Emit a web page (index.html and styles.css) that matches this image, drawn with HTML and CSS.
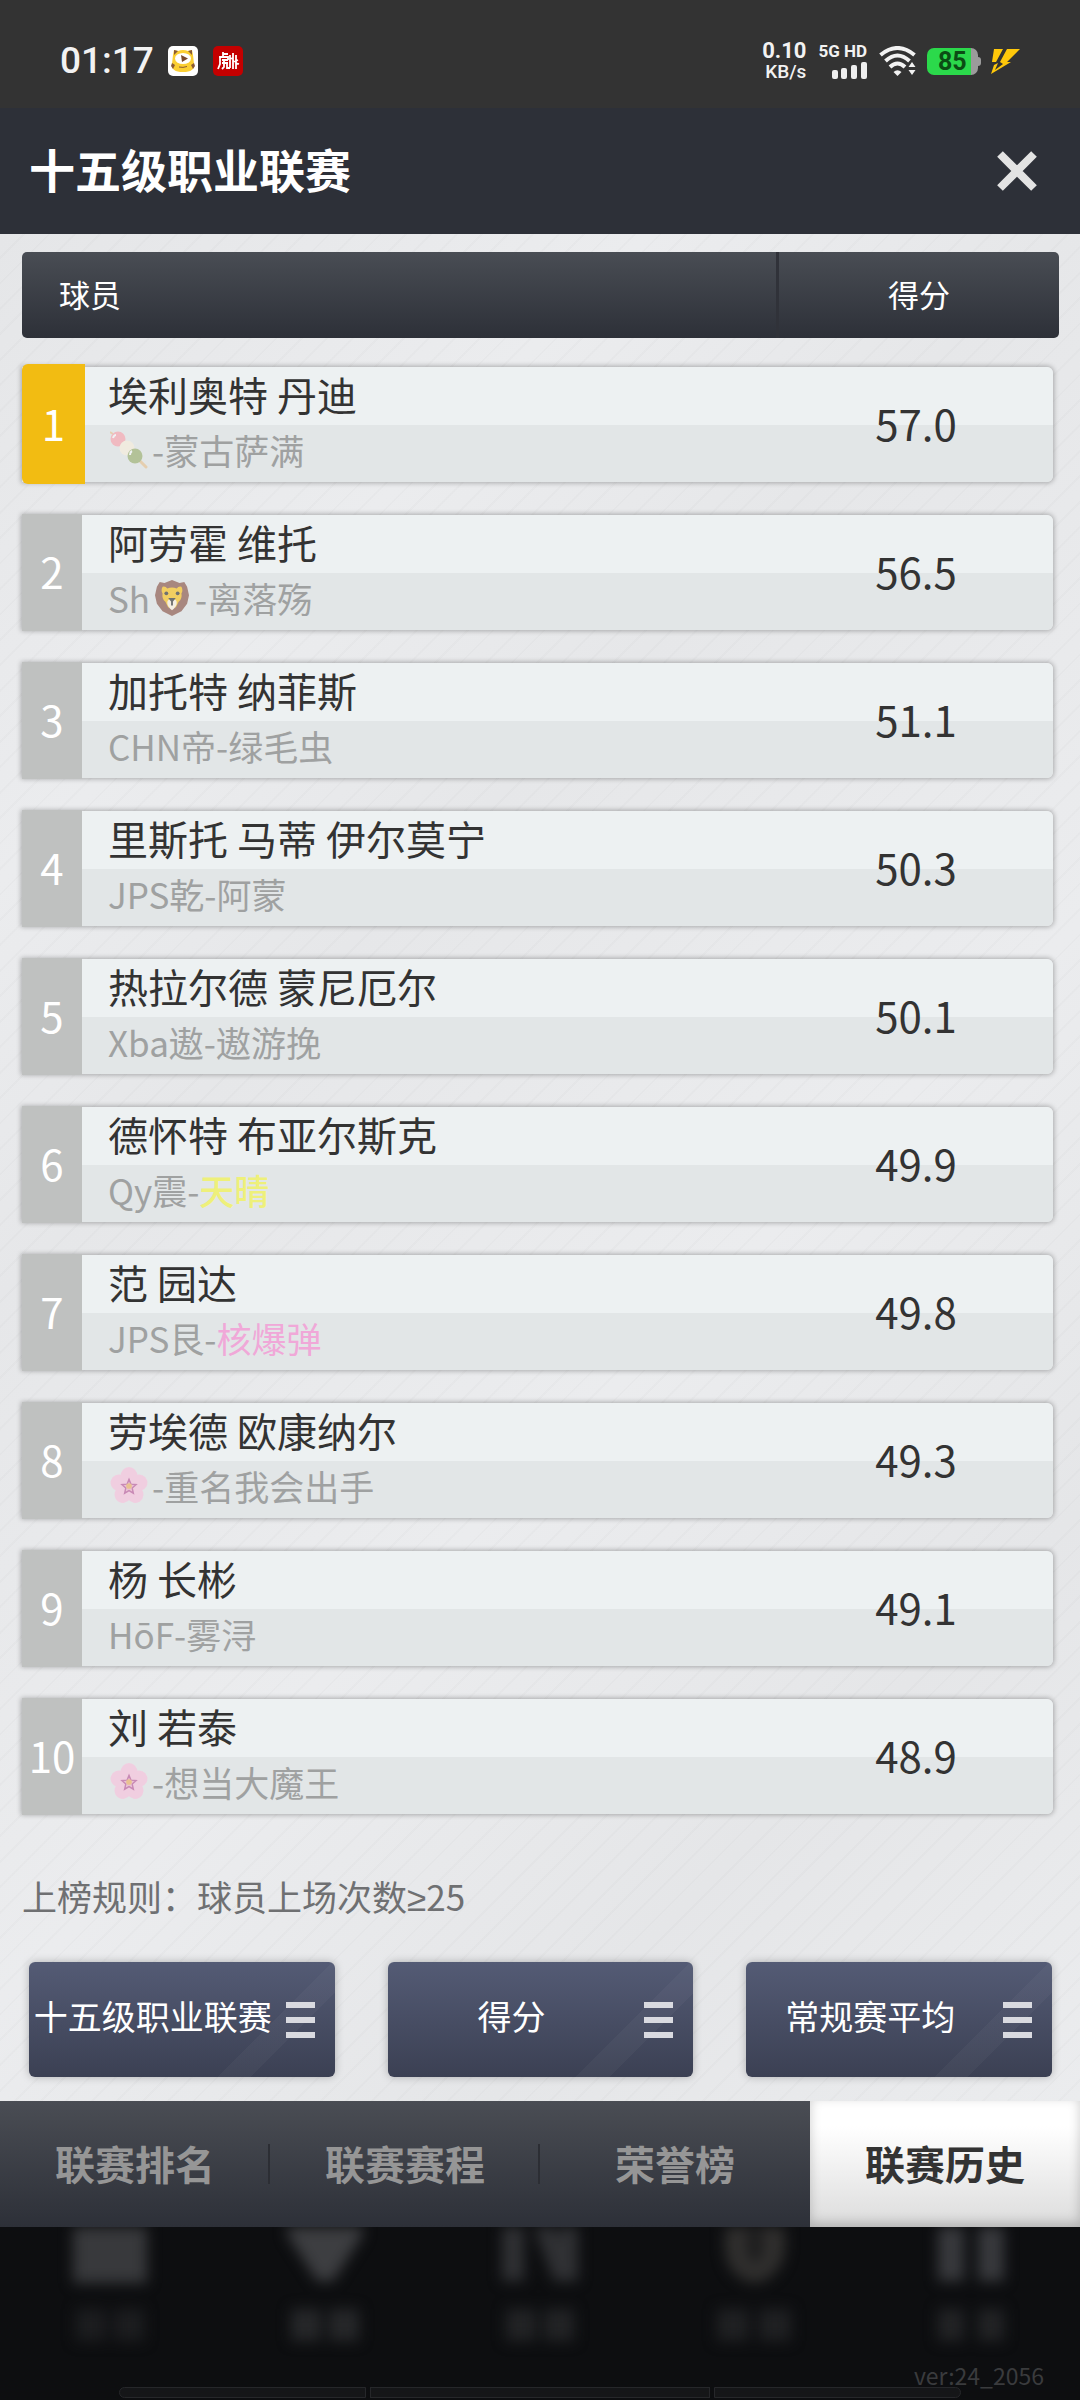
FILE: index.html
```html
<!DOCTYPE html>
<html lang="zh-CN">
<head>
  <meta charset="UTF-8">
  <meta name="viewport" content="width=device-width, initial-scale=1.0">
  <title>十五级职业联赛</title>
  <link rel="stylesheet" href="styles.css">
</head>
<body>
  <!-- shared icons -->
  <svg class="symbols" aria-hidden="true">
    <symbol id="sakura" viewBox="0 0 40 40">
      <g fill="#ffb8da">
        <ellipse cx="20" cy="10" rx="9" ry="10"/>
        <ellipse cx="20" cy="10" rx="9" ry="10" transform="rotate(72 20 20)"/>
        <ellipse cx="20" cy="10" rx="9" ry="10" transform="rotate(144 20 20)"/>
        <ellipse cx="20" cy="10" rx="9" ry="10" transform="rotate(216 20 20)"/>
        <ellipse cx="20" cy="10" rx="9" ry="10" transform="rotate(288 20 20)"/>
      </g>
      <path d="M20 13l2 5 5.500.5-4.100 3.700 1.200 5.400-4.600-2.800-4.600 2.800 1.200-5.400-4.100-3.700 5.500-.5z" fill="#f4a0c4" stroke="#b02f85" stroke-width="1.500"/>
      <circle cx="20" cy="20" r="3" fill="#f0a040"/>
    </symbol>
    <symbol id="menu" viewBox="0 0 29 36">
      <path d="M0 0h29v6H0zM0 15h29v6H0zM0 30h29v6H0z" fill="currentColor"/>
    </symbol>
  </svg>

  <div class="status-bar">
    <span class="time">01:17</span>
    <svg class="app-icon" viewBox="0 0 30 30">
      <rect width="30" height="30" rx="5" fill="#fff"/>
      <path d="M5 9l1-5 4 1q5-2 10 0l4-1 1 5 1 9q1 8-11 8T4 18z" fill="#fbcf33"/>
      <path d="M6 4l4 1-4 4zM24 4l-4 1 4 4zM4 17l3 2-2 4-2-3zM26 17l-3 2 2 4 2-3z" fill="#8a5a33"/>
      <ellipse cx="15" cy="12.500" rx="8" ry="5.500" fill="#fff"/>
      <path d="M13 9l7 3.500-6 3.500z" fill="#7a4a2c"/>
      <path d="M11 21q4 1 8-.5" fill="none" stroke="#8a5a33"/>
    </svg>
    <svg class="app-icon" viewBox="0 0 30 30">
      <rect width="30" height="30" rx="5" fill="#c40000"/>
      <path d="M10 6v5M10 8h5M6 11h9v3M7 11v7l-2 5M9 14h6M9 17h6M11 14v7l-2 2M14 17v5h3M17 9v13M17 13l3-1M20 7v16M23 9v14M20 16l5-2M22 17l4 1" fill="none" stroke="#fff" stroke-width="1.800"/>
    </svg>
    <div class="status-right">
      <div class="speed"><b>0.10</b><span>KB/s</span></div>
      <div class="signal">
        <span>5G HD</span>
        <svg width="35" height="17" viewBox="0 0 35 17" fill="#eee">
          <rect x="0" y="8" width="6" height="9" rx="2"/>
          <rect x="9" y="6" width="6" height="11" rx="2"/>
          <rect x="19" y="3" width="6" height="14" rx="2"/>
          <rect x="29" y="0" width="6" height="17" rx="2"/>
        </svg>
      </div>
      <svg class="wifi" width="37" height="30" viewBox="0 0 37 30">
        <g fill="none" stroke="#f2f2f2" stroke-width="4">
          <path d="M1.500 9Q18.500-5 35.500 9"/>
          <path d="M6.500 15Q18.500 4 30.500 15"/>
          <path d="M11 21Q18.500 14 26 21"/>
        </g>
        <path d="M14.500 26q4-3.500 8 0l-4 4zM29.500 21l3.500-5 3.500 5zM29.500 24h7l-3.500 5z" fill="#f2f2f2"/>
      </svg>
      <div class="battery"><span>85</span></div>
      <svg class="bolt" width="30" height="25" viewBox="0 0 30 25">
        <path d="M4 0h9L6 13H2z" fill="#ffc80a"/>
        <path d="M17 0h13L17 13h4L1 25 4 16l4-2-3 7 8-6-3-2z" fill="#ffc80a"/>
      </svg>
    </div>
  </div>

  <header class="title-bar">
    <h1>十五级职业联赛</h1>
    <button class="close" type="button" aria-label="关闭">
      <svg width="40" height="40" viewBox="0 0 40 40"><path d="M3 3l34 34M37 3L3 37" stroke="#e3e3e3" stroke-width="8"/></svg>
    </button>
  </header>

  <main>
    <table class="ranking">
      <thead>
        <tr><th>球员</th><th class="score">得分</th></tr>
      </thead>
      <tbody>
        <tr class="first">
          <td class="rank">1</td>
          <td class="player">
            <div class="name">埃利奥特 丹迪</div>
            <div class="team"><svg class="emoji" viewBox="0 0 38 38">
              <path d="M8 8l28 28" stroke="#e8b878" stroke-width="3" stroke-linecap="round"/>
              <path d="M0 1l3 2" stroke="#e8b878" stroke-width="2"/>
              <circle cx="8" cy="8" r="7.500" fill="#ff8f9c"/>
              <circle cx="17" cy="17" r="7.500" fill="#fff0d8"/>
              <circle cx="25" cy="25" r="7.500" fill="#86a04c"/>
              <path d="M3 7q1-3 3-3M20 24q0-3 2-4" stroke="#fff" stroke-width="2" fill="none"/>
            </svg>-蒙古萨满</div>
          </td>
          <td class="score">57.0</td>
        </tr>
        <tr>
          <td class="rank">2</td>
          <td class="player">
            <div class="name">阿劳霍 维托</div>
            <div class="team">Sh<svg class="emoji lion" viewBox="0 0 36 38">
              <path d="M5 2l5 1 8-3 8 3 5-1 3 5 2 9-2 9-6 8-10 5-10-5-6-8-2-9 2-9z" fill="#8a5548"/>
              <path d="M8 7q3-1 5 2 5-2 10 0 2-3 5-2 2 4 0 7 1 6-3 9l-3 6h-8l-3-6q-4-3-3-9-2-3 0-7z" fill="#fcc21b"/>
              <path d="M13 24q0-4 5-4t5 4-5 8q-5-4-5-8z" fill="#fff3e0"/>
              <path d="M14 19h8l-4 5zM17 23h2v4h-2z" fill="#333"/>
              <circle cx="12" cy="14" r="2" fill="#333"/><circle cx="24" cy="14" r="2" fill="#333"/>
            </svg>-离落殇</div>
          </td>
          <td class="score">56.5</td>
        </tr>
        <tr>
          <td class="rank">3</td>
          <td class="player">
            <div class="name">加托特 纳菲斯</div>
            <div class="team">CHN帝-绿毛虫</div>
          </td>
          <td class="score">51.1</td>
        </tr>
        <tr>
          <td class="rank">4</td>
          <td class="player">
            <div class="name">里斯托 马蒂 伊尔莫宁</div>
            <div class="team">JPS乾-阿蒙</div>
          </td>
          <td class="score">50.3</td>
        </tr>
        <tr>
          <td class="rank">5</td>
          <td class="player">
            <div class="name">热拉尔德 蒙尼厄尔</div>
            <div class="team">Xba遨-遨游挽</div>
          </td>
          <td class="score">50.1</td>
        </tr>
        <tr>
          <td class="rank">6</td>
          <td class="player">
            <div class="name">德怀特 布亚尔斯克</div>
            <div class="team">Qy震-<span class="yellow">天晴</span></div>
          </td>
          <td class="score">49.9</td>
        </tr>
        <tr>
          <td class="rank">7</td>
          <td class="player">
            <div class="name">范 园达</div>
            <div class="team">JPS艮-<span class="pink">核爆弹</span></div>
          </td>
          <td class="score">49.8</td>
        </tr>
        <tr>
          <td class="rank">8</td>
          <td class="player">
            <div class="name">劳埃德 欧康纳尔</div>
            <div class="team"><svg class="emoji"><use href="#sakura"/></svg>-重名我会出手</div>
          </td>
          <td class="score">49.3</td>
        </tr>
        <tr>
          <td class="rank">9</td>
          <td class="player">
            <div class="name">杨 长彬</div>
            <div class="team">HōF-雾浔</div>
          </td>
          <td class="score">49.1</td>
        </tr>
        <tr>
          <td class="rank">10</td>
          <td class="player">
            <div class="name">刘 若泰</div>
            <div class="team"><svg class="emoji"><use href="#sakura"/></svg>-想当大魔王</div>
          </td>
          <td class="score">48.9</td>
        </tr>
      </tbody>
    </table>

    <p class="rule">上榜规则：球员上场次数<span class="math">≥</span>25</p>

    <div class="filters">
      <button type="button"><span>十五级职业联赛</span><svg><use href="#menu"/></svg></button>
      <button type="button"><span>得分</span><svg><use href="#menu"/></svg></button>
      <button type="button"><span>常规赛平均</span><svg><use href="#menu"/></svg></button>
    </div>
  </main>

  <nav class="tabs">
    <a href="#">联赛排名</a>
    <a href="#">联赛赛程</a>
    <a href="#">荣誉榜</a>
    <a href="#" class="active">联赛历史</a>
  </nav>

  <footer>
    <!-- main menu, dimmed behind the dialog -->
    <div class="dimmed">
      <svg viewBox="0 0 100 130"><path d="M13-20h74v76H13z" fill="#38393c"/><path d="M16 82h30v32H16zM54 82h30v32H54z" fill="#1c1d1f"/></svg>
      <svg viewBox="0 0 100 130"><path d="M12-20h76v27L58 54H42L12 7z" fill="#3d3e41"/><path d="M16 82h30v32H16zM54 82h30v32H54z" fill="#262729"/></svg>
      <svg viewBox="0 0 100 130"><path d="M12 0h22v54H12zM40-10l20 0 28 64H64zM70 0h18v54H70z" fill="#303134"/><path d="M16 82h30v32H16zM54 82h30v32H54z" fill="#222325"/></svg>
      <svg viewBox="0 0 100 130"><path d="M20-20h60v45q-6 27-30 31Q24 52 20 25z" fill="#302f2e"/><ellipse cx="50" cy="18" rx="8" ry="18" fill="#1b1b1c"/><path d="M12 82h32v32H12zM54 82h32v32H54z" fill="#1f2022"/></svg>
      <svg viewBox="0 0 100 130"><path d="M18-20h26v74H18zM58-20h26v74H58z" fill="#38393d"/><path d="M18 82h26v32H18zM58 82h26v32H58z" fill="#222325"/></svg>
    </div>
    <p class="version">ver:24_2056</p>
    <div class="ticker"><span></span><span></span><span></span></div>
  </footer>
</body>
</html>
```

FILE: styles.css
```css
* {
  box-sizing: border-box;
}
body {
  margin: 0;
  min-height: 100vh;
  display: flex;
  flex-direction: column;
  font-family: "Noto Sans CJK SC", sans-serif;
  background: #0d0e10;
  color: #333;
}
.symbols {
  display: none;
}
button {
  font-family: inherit;
  border: none;
  cursor: pointer;
}

/* status bar */
.status-bar {
  display: flex;
  align-items: center;
  height: 108px;
  padding: 14px 60px 0 60px;
  background: #333;
  color: #f2f2f2;
  font-family: Roboto, sans-serif;
}
.time {
  font-size: 37px;
  font-weight: 500;
  line-height: 40px;
  margin-right: 14px;
}
.app-icon {
  width: 30px;
  height: 30px;
  margin-right: 15px;
}
.status-right {
  display: flex;
  align-items: center;
  margin-left: auto;
}
.speed {
  display: flex;
  flex-direction: column;
  align-items: flex-end;
  margin-right: 12px;
}
.speed b {
  font-size: 22px;
  font-weight: 700;
  line-height: 22px;
}
.speed span {
  font-size: 19px;
  font-weight: 500;
  line-height: 20px;
}
.signal {
  display: flex;
  flex-direction: column;
  align-items: flex-end;
  gap: 2px;
  margin-right: 12px;
}
.signal span {
  font-size: 17px;
  font-weight: 700;
  line-height: 17px;
}
.wifi {
  margin-right: 11px;
}
.battery {
  width: 51px;
  height: 27px;
  margin-right: 12px;
  position: relative;
  border-radius: 7px;
  background: linear-gradient(90deg, #2bd94b 44px, #9b9b9b 44px);
}
.battery::after {
  content: "";
  position: absolute;
  right: -3px;
  top: 9px;
  width: 4px;
  height: 9px;
  border-radius: 0 3px 3px 0;
  background: #9b9b9b;
}
.battery span {
  padding-left: 11px;
  font-size: 25px;
  font-weight: 700;
  line-height: 28px;
  color: #0b4d14;
}

/* title */
.title-bar {
  display: flex;
  align-items: center;
  justify-content: space-between;
  height: 126px;
  padding: 0 43px 0 29px;
  background: #2d3038;
  color: #fff;
}
.title-bar h1 {
  margin: 0;
  padding-bottom: 6px;
  font-size: 46px;
  font-weight: 700;
}
.close {
  padding: 0;
  background: none;
  line-height: 0;
}

main {
  padding: 18px 21px 24px 22px;
  background:
    repeating-linear-gradient(135deg, transparent 0 16px, rgba(0, 0, 0, 0.015) 16px 18px),
    linear-gradient(135deg, #e5e6e8 0%, #ebecee 22%, #e6e7e9 36%, #ebecee 60%, #e5e6e8 80%, #ebecee 100%);
}

/* ranking table */
.ranking,
.ranking thead {
  display: block;
}
.ranking tr {
  display: flex;
}
.ranking th,
.ranking td {
  padding: 0;
}
.ranking thead tr {
  height: 86px;
  line-height: 84px;
  border-radius: 5px;
  background: linear-gradient(#494d54, #2d3038);
  color: #fff;
  font-size: 31px;
}
.ranking th {
  flex: 1;
  padding-left: 37px;
  font-weight: 400;
  text-align: left;
}
.ranking th.score {
  flex: 0 0 283px;
  padding: 0;
  border-left: 3px solid #303239;
  text-align: center;
}
.ranking tbody {
  display: flex;
  flex-direction: column;
  gap: 33px;
  margin: 29px 6px 0 0;
}
.ranking tbody tr {
  height: 115px;
  border-radius: 0 6px 6px 0;
  background: linear-gradient(#edf1f2 50%, #e2e6e7 50%);
  box-shadow: 0 0 5px 1px rgba(0, 0, 0, 0.28);
}
.rank {
  width: 60px;
  margin: -1px 0;
  background: #bfc1c0;
  color: #fff;
  font-size: 42px;
  line-height: 113px;
  text-align: center;
}
.first .rank {
  width: 63px;
  margin: -3px 0 -2px;
  line-height: 117px;
  border-radius: 6px 0 0 6px;
  background: #f2bc12;
}
.player {
  flex: 1;
}
.ranking .player {
  padding-left: 26px;
}
.ranking .first .player {
  padding-left: 23px;
}
.name {
  font-size: 40px;
  line-height: 54px;
}
.team {
  display: flex;
  align-items: center;
  font-size: 35px;
  line-height: 58px;
  color: #9fa1a1;
}
.emoji {
  width: 38px;
  height: 38px;
  margin: 0 4px 0 2px;
  opacity: 0.5;
}
.lion {
  width: 34px;
  margin-left: 5px;
  margin-right: 6px;
  opacity: 0.65;
}
.yellow {
  color: #eef07a;
  font-weight: 500;
}
.pink {
  color: #f0a8d8;
}
.ranking td.score {
  width: 274px;
  font-size: 42px;
  line-height: 111px;
  text-align: center;
}

.rule {
  margin: 57px 0 41px;
  font-size: 35px;
  line-height: 50px;
  color: #6f7072;
}
.math {
  font-family: "Noto Sans", sans-serif;
  line-height: 30px;
}

/* filter buttons */
.filters {
  display: flex;
  gap: 53px;
  padding: 0 7px;
}
.filters button {
  flex: 1;
  display: flex;
  align-items: center;
  height: 115px;
  padding: 0 20px 0 0;
  border-radius: 6px;
  background: linear-gradient(135deg, transparent 72%, rgba(255, 255, 255, 0.03) 72% 80%, transparent 80%), linear-gradient(#545b75, #3b4053);
  box-shadow: 0 0 8px rgba(0, 0, 0, 0.25);
  color: #fff;
  font-size: 34px;
}
.filters span {
  flex: 1;
  padding: 0 9px 8px 0;
  white-space: nowrap;
}
.filters svg {
  width: 29px;
  height: 36px;
  color: #d9dae0;
}

/* bottom tabs */
.tabs {
  display: flex;
  background: linear-gradient(#4a4d54, #2d3038);
}
.tabs a {
  flex: 1;
  height: 126px;
  line-height: 124px;
  background: linear-gradient(#2c2e34, #2c2e34) right center / 2px 40px no-repeat;
  color: #969696;
  font-size: 40px;
  font-weight: 700;
  text-align: center;
  text-decoration: none;
}
.tabs a:nth-child(3) {
  background: none;
}
.tabs .active {
  background: linear-gradient(#fff 20%, #dcdcdc);
  box-shadow: inset 0 -4px 12px rgba(0, 0, 0, 0.2);
  color: #333;
}

footer {
  flex: 1;
  display: flex;
  flex-direction: column;
  overflow: hidden;
}
.dimmed {
  display: flex;
  justify-content: space-around;
  padding: 0 3px;
}
.dimmed svg {
  width: 100px;
  height: 130px;
  filter: blur(7px);
}
.version {
  margin: 6px 36px 0 0;
  font-size: 23px;
  line-height: 24px;
  color: #3a3b3d;
  text-align: right;
}
.ticker {
  display: flex;
  gap: 4px;
  padding: 0 119px;
}
.ticker span {
  flex: 247;
  height: 11px;
  border: 1px solid #26272a;
  border-radius: 6px 0 0 6px;
  background: #151618;
}
.ticker span:nth-child(2) {
  flex: 340;
  border-radius: 0;
}
.ticker span:nth-child(3) {
  border-radius: 0 6px 6px 0;
}
```
